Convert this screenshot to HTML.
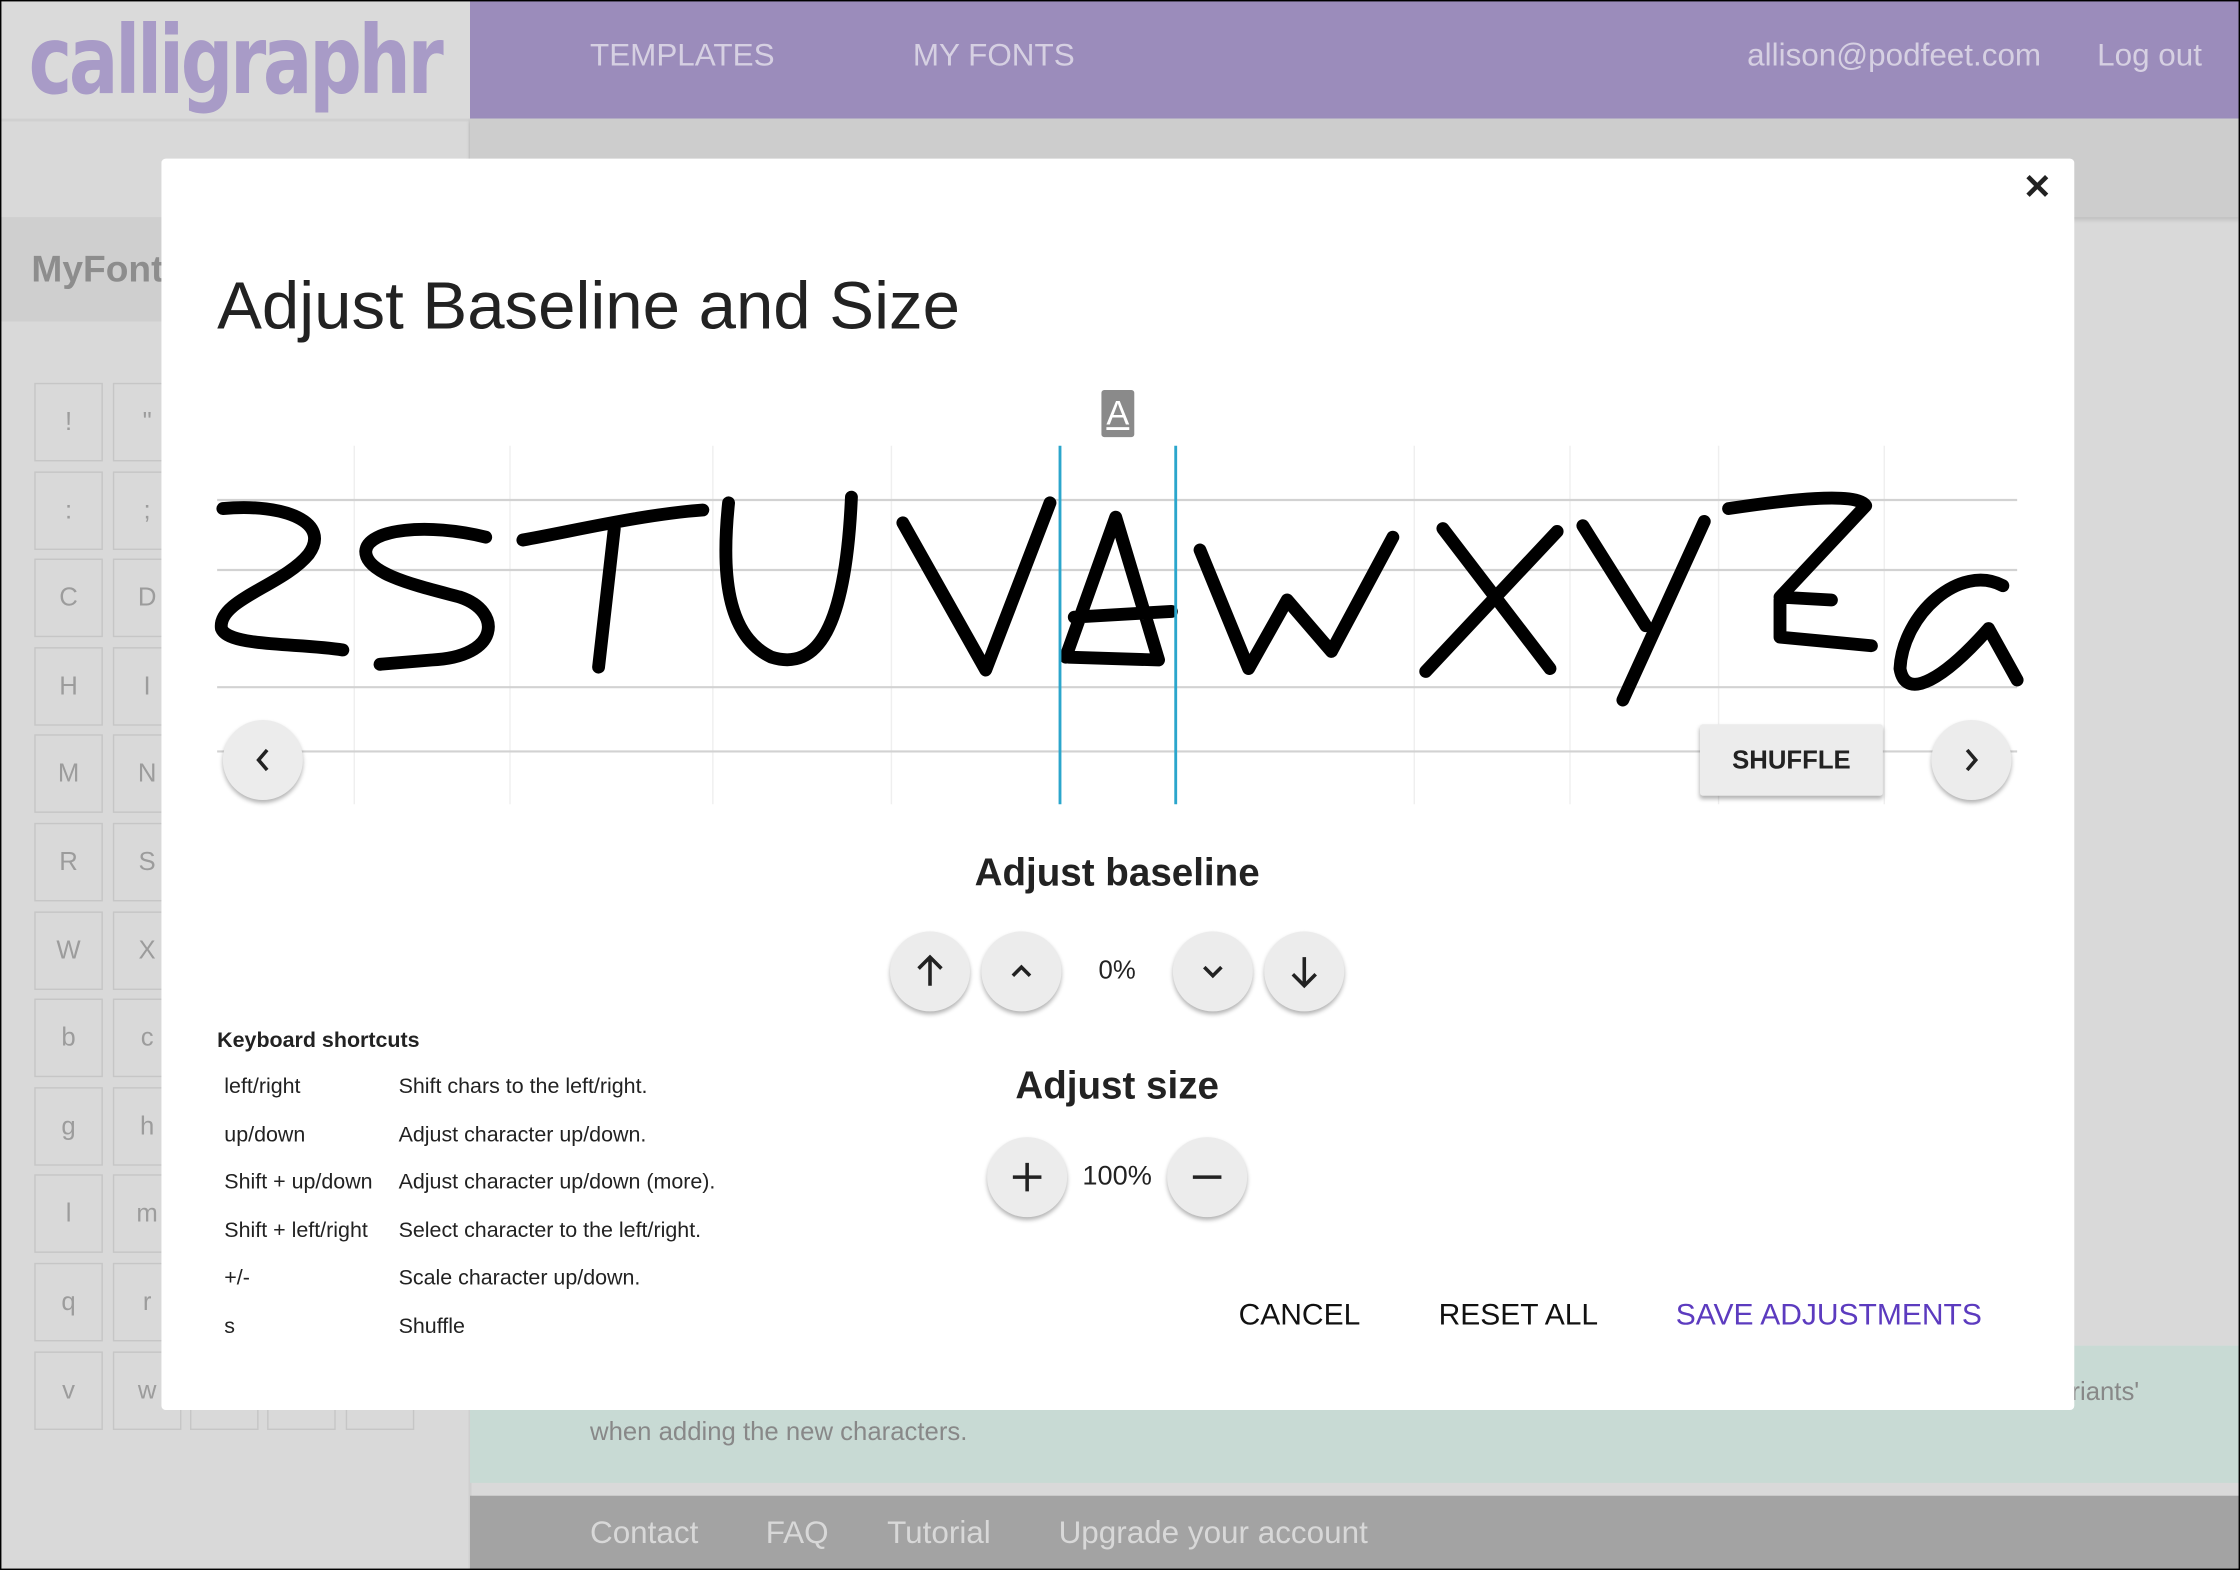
<!DOCTYPE html>
<html><head><meta charset="utf-8"><style>
html,body{margin:0;padding:0;width:2240px;height:1570px;overflow:hidden;background:#000;}
#w{position:absolute;left:0;top:0;width:1568px;height:1099px;transform:scale(1.428571);transform-origin:0 0;font-family:"Liberation Sans",sans-serif;background:#d9d9d9;overflow:hidden;}
.a{position:absolute;}
.cell{position:absolute;width:46px;height:53px;border:1.5px solid #c6c6c6;color:#9c9c9c;font-size:18px;text-align:center;line-height:53px;box-sizing:content-box;}
.btn{position:absolute;width:56px;height:56px;border-radius:50%;background:#ececec;box-shadow:0 2px 3px rgba(0,0,0,.3);}
.btn svg{position:absolute;left:0;top:0}
.ks{position:absolute;font-size:15px;color:#222;}
.nav{position:absolute;color:#d6d0e2;font-size:22px;top:26px;}
.foot{position:absolute;color:#d8d8d8;font-size:22px;top:1060px;}
</style></head><body><div id="w">
<div class="a" style="left:0;top:0;width:1568px;height:1099px;border:1px solid #000;box-sizing:border-box;z-index:50;pointer-events:none"></div>
<!-- sidebar -->
<div class="a" style="left:0;top:0;width:329px;height:83px;background:#dadada;border-bottom:2px solid #d0d0d0;overflow:hidden">
<div class="a" style="left:20px;top:4px;font-family:'DejaVu Sans',sans-serif;font-weight:bold;font-size:66px;color:#a89bc7;letter-spacing:-3px;transform:scaleX(0.78);transform-origin:0 0;white-space:nowrap">calligraphr</div>
</div>
<div class="a" style="left:0;top:152px;width:329px;height:73px;background:#cfcfcf"></div>
<div class="a" style="left:22px;top:173px;font-size:26px;font-weight:bold;color:#8d8d8d">MyFonts</div>
<div class="a" style="left:328px;top:83px;width:2px;height:1016px;background:#cfcfcf"></div>
<!-- header -->
<div class="a" style="left:329px;top:0;width:1239px;height:83px;background:#9b8cbb"></div>
<div class="nav" style="left:413px">TEMPLATES</div>
<div class="nav" style="left:639px">MY FONTS</div>
<div class="nav" style="left:1223px">allison@podfeet.com</div>
<div class="nav" style="left:1468px">Log out</div>
<div class="a" style="left:329px;top:83px;width:1239px;height:69px;background:#cdcdcd;box-shadow:0 2px 3px rgba(0,0,0,.12)"></div>
<!-- cells -->
<div id="cells"></div>
<!-- green -->
<div class="a" style="left:329px;top:942px;width:1239px;height:96px;background:#c8dad4"></div>
<div class="a" style="left:413px;top:992px;font-size:18px;color:#888">when adding the new characters.</div>
<div class="a" style="left:1450px;top:964px;font-size:18px;color:#888">riants'</div>
<div class="a" style="left:329px;top:1047px;width:1239px;height:52px;background:#a3a3a3"></div>
<div class="foot" style="left:413px">Contact</div>
<div class="foot" style="left:536px">FAQ</div>
<div class="foot" style="left:621px">Tutorial</div>
<div class="foot" style="left:741px">Upgrade your account</div>
<!-- modal -->
<div class="a" style="left:113px;top:111px;width:1339px;height:876px;background:#fff;border-radius:3px;z-index:10">
<div class="a" style="left:1303px;top:6px;font-size:24px;font-weight:bold;color:#222">✕</div>
<div class="a" style="left:39px;top:75px;font-size:47px;color:#222">Adjust Baseline and Size</div>
<div class="a" style="left:658px;top:162px;width:23px;height:33px;background:#8a8a8a;border-radius:2px;color:#fff;font-size:24px;text-align:center;line-height:33px;text-decoration:underline">A</div>
<svg class="a" style="left:0;top:0" width="1339" height="876" viewBox="113 111 1339 876">
<g stroke="#efefef" stroke-width="1">
<line x1="248" y1="312" x2="248" y2="563"/><line x1="357" y1="312" x2="357" y2="563"/><line x1="499" y1="312" x2="499" y2="563"/><line x1="624" y1="312" x2="624" y2="563"/><line x1="990" y1="312" x2="990" y2="563"/><line x1="1099" y1="312" x2="1099" y2="563"/><line x1="1203" y1="312" x2="1203" y2="563"/><line x1="1319" y1="312" x2="1319" y2="563"/>
</g>
<g stroke="#d2d2d2" stroke-width="1.5">
<line x1="152" y1="350" x2="1412" y2="350"/><line x1="152" y1="399" x2="1412" y2="399"/><line x1="152" y1="481" x2="1412" y2="481"/><line x1="152" y1="526" x2="1412" y2="526"/>
</g>
<g fill="none" stroke="#000" stroke-width="9" stroke-linecap="round" stroke-linejoin="round">
<path d="M156,356 C200,352 232,366 216,388 C198,410 152,420 155,440 C160,453 210,450 240,455"/>
<path d="M340,376 C300,366 257,370 256,386 C256,402 292,410 322,418 C352,428 350,460 302,462 L266,465"/>
<path d="M366,378 C400,372 450,360 492,357 M430,370 L419,467"/>
<path d="M510,352 C505,400 508,445 540,460 C572,470 592,440 596,348"/>
<path d="M632,366 L690,469 L735,352"/>
<path d="M746,460 L781,362 L811,462 L748,460 M752,432 L820,428"/>
<path d="M840,385 L874,468 L901,420 L932,456 L975,376"/>
<path d="M1010,370 L1085,468 M1090,372 L998,470"/>
<path d="M1108,368 L1152,438 M1193,365 L1136,490"/>
<path d="M1210,356 C1250,350 1300,344 1306,354 L1246,418 L1282,420 M1246,420 L1246,446 L1310,452"/>
<path d="M1402,410 C1372,394 1332,430 1330,468 C1334,492 1362,474 1392,440 L1412,476"/>
</g>
<line x1="742" y1="312" x2="742" y2="563" stroke="#2ba6cc" stroke-width="2"/>
<line x1="823" y1="312" x2="823" y2="563" stroke="#2ba6cc" stroke-width="2"/>
</svg>
<div class="btn" style="left:43px;top:393px"><svg width="56" height="56"><path d="M31,21 L25,28 L31,35" fill="none" stroke="#222" stroke-width="2.5"/></svg></div>
<div class="btn" style="left:1239px;top:393px"><svg width="56" height="56"><path d="M25,21 L31,28 L25,35" fill="none" stroke="#222" stroke-width="2.5"/></svg></div>
<div class="a" style="left:1077px;top:396px;width:128px;height:50px;background:#ececec;box-shadow:0 2px 3px rgba(0,0,0,.3);font-size:18px;font-weight:bold;color:#222;text-align:center;line-height:50px;border-radius:2px">SHUFFLE</div>
<div class="a" style="left:469px;top:485px;width:400px;text-align:center;font-size:27px;font-weight:bold;color:#222">Adjust baseline</div>
<div class="btn" style="left:510px;top:541px"><svg width="56" height="56"><path d="M28,38 V18 M20,26 L28,18 L36,26" fill="none" stroke="#222" stroke-width="2.5"/></svg></div>
<div class="btn" style="left:574px;top:541px"><svg width="56" height="56"><path d="M22,31 L28,25 L34,31" fill="none" stroke="#222" stroke-width="2.5"/></svg></div>
<div class="a" style="left:629px;top:558px;width:80px;text-align:center;font-size:18px;color:#222">0%</div>
<div class="btn" style="left:708px;top:541px"><svg width="56" height="56"><path d="M22,25 L28,31 L34,25" fill="none" stroke="#222" stroke-width="2.5"/></svg></div>
<div class="btn" style="left:772px;top:541px"><svg width="56" height="56"><path d="M28,18 V38 M20,30 L28,38 L36,30" fill="none" stroke="#222" stroke-width="2.5"/></svg></div>
<div class="a" style="left:469px;top:634px;width:400px;text-align:center;font-size:27px;font-weight:bold;color:#222">Adjust size</div>
<div class="btn" style="left:578px;top:685px"><svg width="56" height="56"><path d="M28,18 V38 M18,28 H38" fill="none" stroke="#222" stroke-width="2.5"/></svg></div>
<div class="a" style="left:629px;top:702px;width:80px;text-align:center;font-size:19px;color:#222">100%</div>
<div class="btn" style="left:704px;top:685px"><svg width="56" height="56"><path d="M18,28 H38" fill="none" stroke="#222" stroke-width="2.5"/></svg></div>
<div class="ks" style="left:39px;top:609px;font-weight:bold">Keyboard shortcuts</div>
<div class="ks" style="left:44px;top:641px">left/right</div><div class="ks" style="left:166px;top:641px">Shift chars to the left/right.</div>
<div class="ks" style="left:44px;top:675px">up/down</div><div class="ks" style="left:166px;top:675px">Adjust character up/down.</div>
<div class="ks" style="left:44px;top:708px">Shift + up/down</div><div class="ks" style="left:166px;top:708px">Adjust character up/down (more).</div>
<div class="ks" style="left:44px;top:742px">Shift + left/right</div><div class="ks" style="left:166px;top:742px">Select character to the left/right.</div>
<div class="ks" style="left:44px;top:775px">+/-</div><div class="ks" style="left:166px;top:775px">Scale character up/down.</div>
<div class="ks" style="left:44px;top:809px">s</div><div class="ks" style="left:166px;top:809px">Shuffle</div>
<div class="a" style="left:754px;top:798px;font-size:21px;color:#111">CANCEL</div>
<div class="a" style="left:894px;top:798px;font-size:21px;color:#111">RESET ALL</div>
<div class="a" style="left:1060px;top:798px;font-size:21px;color:#5c3bbf">SAVE ADJUSTMENTS</div>
</div>
<script>
var rows=[["!",'"'],[":",";"],["C","D"],["H","I"],["M","N"],["R","S"],["W","X"],["b","c"],["g","h"],["l","m"],["q","r"],["v","w"]];
var xs=[24,79,133,187,242],h="";
rows.forEach(function(r,i){var y=268+i*61.6;xs.forEach(function(x,j){h+='<div class="cell" style="left:'+x+'px;top:'+y+'px">'+(r[j]||"")+'</div>';});});
document.getElementById("cells").innerHTML=h;
</script>
</div></body></html>
